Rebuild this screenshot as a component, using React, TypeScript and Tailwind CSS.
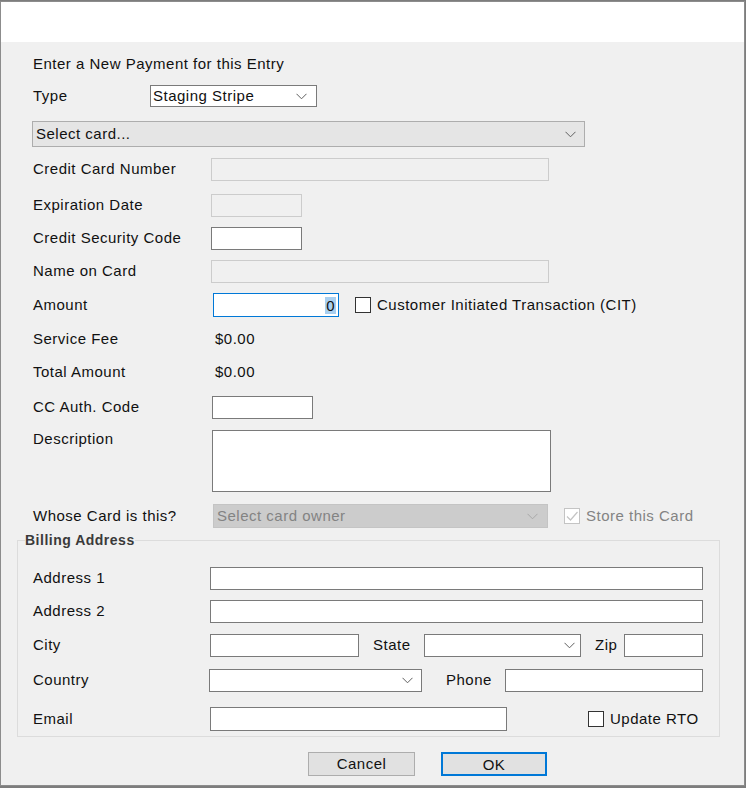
import type { ReactNode } from 'react';

const font = { fontFamily: '"Liberation Sans", Arial, sans-serif' };

function Chevron({ color = '#5f5f5f' }: { color?: string }) {
  return (
    <svg width="11" height="7" viewBox="0 0 11 7" className="shrink-0">
      <path d="M0.5 0.8 L5.5 5.8 L10.5 0.8" fill="none" stroke={color} strokeWidth="1" />
    </svg>
  );
}

function Row({ h, mt, children, top }: { h: string; mt: string; children: ReactNode; top?: boolean }) {
  return <div className={`flex ${top ? 'items-start' : 'items-center'} ${h} ${mt}`}>{children}</div>;
}

function Check({ checked, disabled }: { checked?: boolean; disabled?: boolean }) {
  return (
    <span
      className={`flex h-[16px] w-[16px] shrink-0 items-center justify-center border bg-white ${
        disabled ? 'border-[#c4c4c4]' : 'border-[#333333]'
      }`}
    >
      {checked && (
        <svg width="14" height="14" viewBox="0 0 14 14">
          <path d="M2 7.5 L5.5 11 L12.5 3" fill="none" stroke="#c4c4c4" strokeWidth="1.2" />
        </svg>
      )}
    </span>
  );
}

export default function App() {
  return (
    <div className="h-[788px] w-[746px] bg-[#7d7d7d] pt-px text-[15px] tracking-[0.5px] text-[#111]" style={font}>
      <div className="flex h-[785px] w-[745px] flex-col border border-[#8c8c8c] bg-[#f0f0f0]">
        <div className="h-[40px] shrink-0 bg-white" />

        <div className="pl-[32px]">
          <Row h="h-[18px]" mt="mt-[13px]">
            <span>Enter a New Payment for this Entry</span>
          </Row>

          <Row h="h-[22px]" mt="mt-[12px]">
            <span className="w-[117px] shrink-0">Type</span>
            <div className="flex h-[22px] w-[167px] items-center justify-between border border-[#7a7a7a] bg-white pl-[2px] pr-[9px]">
              <span>Staging Stripe</span>
              <Chevron />
            </div>
          </Row>

          <Row h="h-[26px]" mt="mt-[14px]">
            <div className="-ml-px flex h-[26px] w-[553px] items-center justify-between border border-[#adadad] bg-[#e5e5e5] pl-[3px] pr-[8px]">
              <span>Select card...</span>
              <Chevron />
            </div>
          </Row>

          <Row h="h-[23px]" mt="mt-[11px]">
            <span className="w-[178px] shrink-0">Credit Card Number</span>
            <input disabled className="h-[23px] w-[338px] border border-[#cccccc] bg-[#f0f0f0]" />
          </Row>

          <Row h="h-[23px]" mt="mt-[13px]">
            <span className="w-[178px] shrink-0">Expiration Date</span>
            <input disabled className="h-[23px] w-[91px] border border-[#cccccc] bg-[#f0f0f0]" />
          </Row>

          <Row h="h-[23px]" mt="mt-[10px]">
            <span className="w-[178px] shrink-0">Credit Security Code</span>
            <input className="h-[23px] w-[91px] border border-[#7a7a7a] bg-white" />
          </Row>

          <Row h="h-[23px]" mt="mt-[10px]">
            <span className="w-[178px] shrink-0">Name on Card</span>
            <input disabled className="h-[23px] w-[338px] border border-[#cccccc] bg-[#f0f0f0]" />
          </Row>

          <Row h="h-[24px]" mt="mt-[10px]">
            <span className="w-[180px] shrink-0">Amount</span>
            <div className="flex h-[24px] w-[126px] items-center justify-end border border-[#0078d7] bg-white pr-[2px]">
              <span className="bg-[#a8cff0] px-px leading-[17px]">0</span>
            </div>
            <span className="ml-[16px]">
              <Check />
            </span>
            <span className="ml-[6px]">Customer Initiated Transaction (CIT)</span>
          </Row>

          <Row h="h-[22px]" mt="mt-[11px]">
            <span className="w-[182px] shrink-0">Service Fee</span>
            <span>$0.00</span>
          </Row>

          <Row h="h-[22px]" mt="mt-[11px]">
            <span className="w-[182px] shrink-0">Total Amount</span>
            <span>$0.00</span>
          </Row>

          <Row h="h-[23px]" mt="mt-[13px]">
            <span className="w-[179px] shrink-0">CC Auth. Code</span>
            <input className="h-[23px] w-[101px] border border-[#7a7a7a] bg-white" />
          </Row>

          <Row h="h-[62px]" mt="mt-[11px]" top>
            <span className="w-[179px] shrink-0 leading-[18px]">Description</span>
            <textarea className="h-[62px] w-[339px] resize-none border border-[#7a7a7a] bg-white" />
          </Row>

          <Row h="h-[24px]" mt="mt-[12px]">
            <span className="w-[180px] shrink-0">Whose Card is this?</span>
            <div className="flex h-[24px] w-[335px] items-center justify-between border border-[#c4c4c4] bg-[#cccccc] pl-[3px] pr-[9px]">
              <span className="text-[#838383]">Select card owner</span>
              <Chevron color="#a8a8a8" />
            </div>
            <span className="ml-[16px]">
              <Check checked disabled />
            </span>
            <span className="ml-[6px] text-[#838383]">Store this Card</span>
          </Row>
        </div>

        <fieldset className="mx-[16px] mt-[4px] w-[703px] border border-[#dcdcdc] pb-[5px]">
          <legend className="ml-[7px] text-[14px] font-bold leading-[16px] text-[#3a3a3a]">Billing Address</legend>
          <div className="pl-[15px]">
            <Row h="h-[23px]" mt="mt-[19px]">
              <span className="w-[177px] shrink-0">Address 1</span>
              <input className="h-[23px] w-[493px] border border-[#7a7a7a] bg-white" />
            </Row>

            <Row h="h-[23px]" mt="mt-[10px]">
              <span className="w-[177px] shrink-0">Address 2</span>
              <input className="h-[23px] w-[493px] border border-[#7a7a7a] bg-white" />
            </Row>

            <Row h="h-[23px]" mt="mt-[11px]">
              <span className="w-[177px] shrink-0">City</span>
              <input className="h-[23px] w-[149px] border border-[#7a7a7a] bg-white" />
              <span className="ml-[14px] w-[51px] shrink-0">State</span>
              <div className="flex h-[23px] w-[157px] items-center justify-end border border-[#7a7a7a] bg-white pr-[5px]">
                <Chevron />
              </div>
              <span className="ml-[14px] w-[29px] shrink-0">Zip</span>
              <input className="h-[23px] w-[79px] border border-[#7a7a7a] bg-white" />
            </Row>

            <Row h="h-[23px]" mt="mt-[12px]">
              <span className="w-[176px] shrink-0">Country</span>
              <div className="flex h-[23px] w-[213px] items-center justify-end border border-[#7a7a7a] bg-white pr-[8px]">
                <Chevron />
              </div>
              <span className="ml-[24px] w-[59px] shrink-0">Phone</span>
              <input className="h-[23px] w-[198px] border border-[#7a7a7a] bg-white" />
            </Row>

            <Row h="h-[24px]" mt="mt-[15px]">
              <span className="w-[177px] shrink-0">Email</span>
              <input className="h-[24px] w-[297px] border border-[#7a7a7a] bg-white" />
              <span className="ml-[81px]">
                <Check />
              </span>
              <span className="ml-[6px]">Update RTO</span>
            </Row>
          </div>
        </fieldset>

        <div className="mt-[15px] flex pl-[307px]">
          <button className="h-[24px] w-[107px] border border-[#adadad] bg-[#e1e1e1]">Cancel</button>
          <button className="ml-[26px] h-[24px] w-[106px] border-2 border-[#0078d7] bg-[#e1e1e1]">OK</button>
        </div>
      </div>
    </div>
  );
}
